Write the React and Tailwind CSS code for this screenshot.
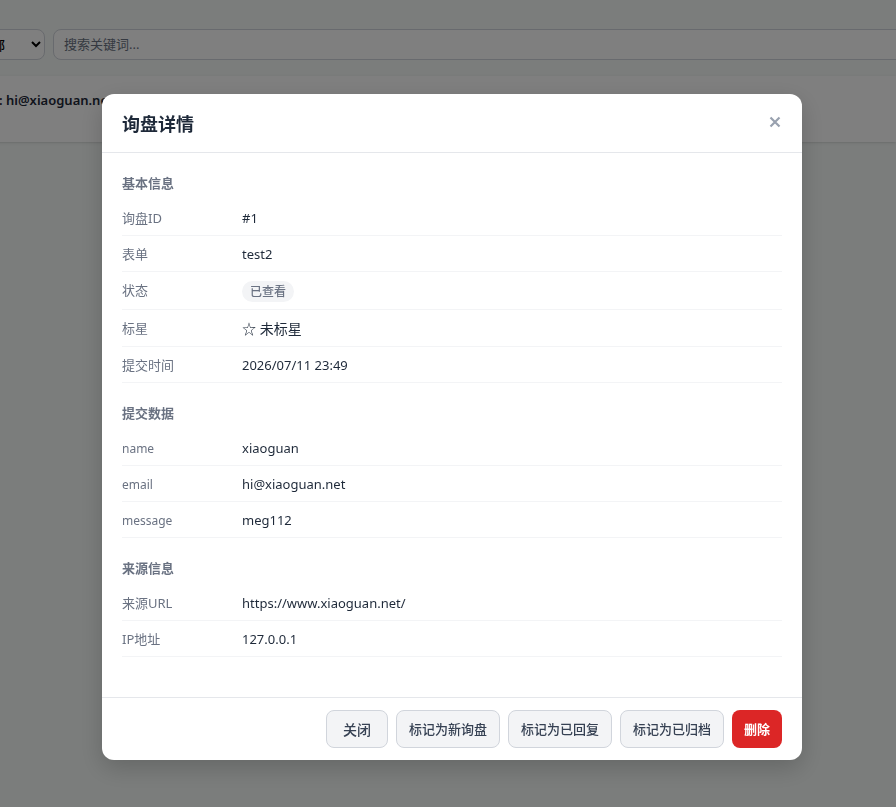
import React from "react";

const sections = [
  {
    title: "基本信息",
    rows: [
      { label: "询盘ID", value: "#1" },
      { label: "表单", value: "test2" },
      { label: "状态", value: "已查看", variant: "badge" },
      { label: "标星", value: "☆ 未标星", variant: "star" },
      { label: "提交时间", value: "2026/07/11 23:49" },
    ],
  },
  {
    title: "提交数据",
    plain: true,
    rows: [
      { label: "name", value: "xiaoguan" },
      { label: "email", value: "hi@xiaoguan.net" },
      { label: "message", value: "meg112" },
    ],
  },
  {
    title: "来源信息",
    rows: [
      { label: "来源URL", value: "https://www.xiaoguan.net/" },
      { label: "IP地址", value: "127.0.0.1" },
    ],
  },
];

const markActions = ["标记为新询盘", "标记为已回复", "标记为已归档"];

function DetailValue({ value, variant }) {
  if (variant === "badge") {
    return (
      <span className="inline-block rounded-full bg-gray-100 px-2 text-xs leading-[21px] font-medium text-gray-500">
        {value}
      </span>
    );
  }
  if (variant === "star") {
    return <span className="block text-sm leading-5">{value}</span>;
  }
  return value;
}

// plain sections list raw form field names, set a little smaller
function DetailSection({ title, rows, plain }) {
  return (
    <section className="mb-5">
      <h3 className="mb-[7px] text-[13px] leading-5 font-bold text-gray-500">{title}</h3>
      <dl>
        {rows.map((row) => (
          <div key={row.label} className="flex border-b border-gray-100 pt-[9px] pb-[7px]">
            <dt className={`w-[120px] shrink-0 leading-[19px] text-gray-500 ${plain ? "text-[12px]" : "text-[13px]"}`}>
              {row.label}
            </dt>
            <dd className="min-w-0 flex-1 text-[13px] leading-[19px] break-all text-gray-800">
              <DetailValue value={row.value} variant={row.variant} />
            </dd>
          </div>
        ))}
      </dl>
    </section>
  );
}

function InquiryList() {
  return (
    <main className="-ml-9 pt-[29px]">
      <div className="flex gap-2">
        <select
          aria-label="状态"
          className="h-[31px] w-[81px] shrink-0 rounded-lg border border-gray-300 bg-white px-[10px] text-[13px] font-medium text-black"
        >
          <option>全部</option>
        </select>
        <input
          type="text"
          aria-label="搜索关键词"
          placeholder="搜索关键词..."
          className="-mr-4 h-[31px] min-w-0 flex-1 rounded-lg border border-gray-300 bg-white px-[10px] pb-[2px] text-[13px] placeholder:text-gray-500"
        />
      </div>
      <div className="mt-4 h-[66px] bg-white pt-[14px] pl-[35px] text-[13px] leading-5 font-semibold text-gray-800 shadow-sm">
        : hi@xiaoguan.net
      </div>
    </main>
  );
}

export default function App() {
  return (
    <div className="min-h-screen overflow-hidden bg-[#f6faf8] [font-family:'Noto_Sans','Noto_Sans_CJK_SC',sans-serif]">
      <InquiryList />
      <div className="fixed inset-0 flex items-start justify-center overflow-y-auto bg-black/50 pt-[94px] pl-2">
        <div
          role="dialog"
          aria-modal="true"
          aria-labelledby="inquiry-title"
          className="w-full max-w-[700px] rounded-xl bg-white shadow-[0_8px_24px_rgba(0,0,0,0.18)]"
        >
          <header className="flex items-center justify-between border-b border-gray-200 px-5 pt-[17px] pb-[15px]">
            <h2 id="inquiry-title" className="text-lg leading-[26px] font-bold text-gray-800">
              询盘详情
            </h2>
            <button type="button" aria-label="关闭" className="pb-1 text-gray-400">
              <svg viewBox="0 0 14 14" className="size-[14px]" fill="none" stroke="currentColor" strokeWidth="2.2">
                <path d="M2.5 2.5 11.5 11.5M11.5 2.5 2.5 11.5" />
              </svg>
            </button>
          </header>
          <div className="p-5">
            {sections.map((section) => (
              <DetailSection key={section.title} {...section} />
            ))}
          </div>
          <footer className="flex justify-end gap-2 border-t border-gray-200 px-5 py-3">
            <button
              type="button"
              className="h-[38px] rounded-lg border border-gray-300 bg-gray-100 px-4 pt-[2px] text-sm font-medium text-gray-700"
            >
              关闭
            </button>
            {markActions.map((label) => (
              <button
                key={label}
                type="button"
                className="h-[38px] rounded-lg border border-gray-300 bg-gray-100 px-3 pt-[2px] text-[13px] font-medium text-gray-700"
              >
                {label}
              </button>
            ))}
            <button
              type="button"
              className="h-[38px] rounded-lg bg-[#dc2626] px-3 pt-[2px] text-[13px] font-bold text-white"
            >
              删除
            </button>
          </footer>
        </div>
      </div>
    </div>
  );
}
